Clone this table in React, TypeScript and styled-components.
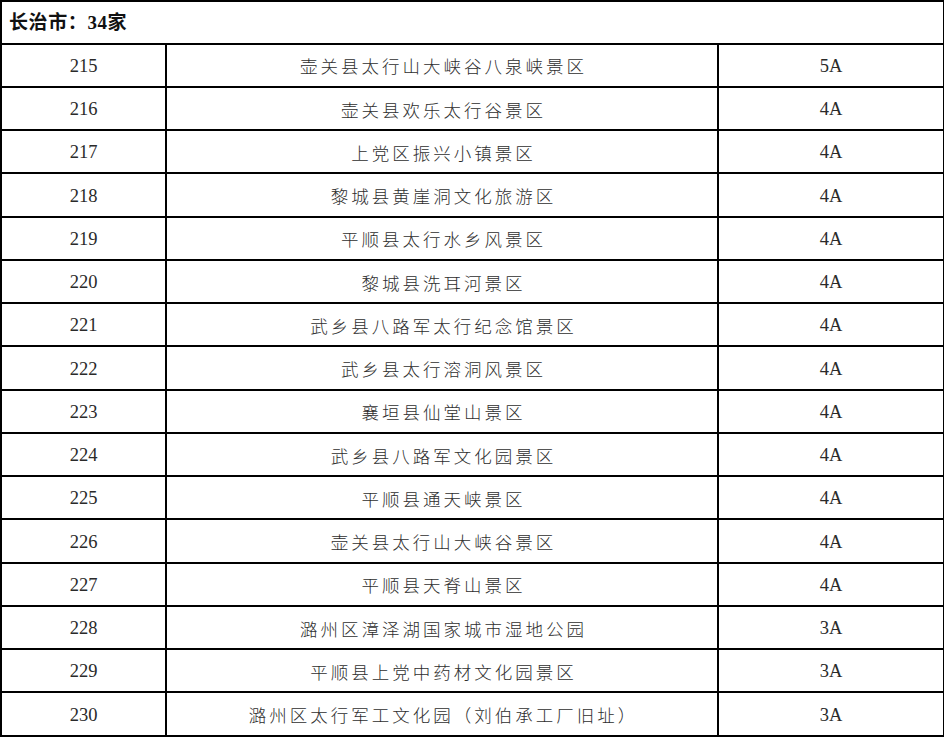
import React from "react";
import styled, { createGlobalStyle } from "styled-components";

const GlobalStyle = createGlobalStyle`
  html, body {
    margin: 0;
    padding: 0;
    background: #ffffff;
  }
`;

const rows: [number, string, string][] = [
  [215, "壶关县太行山大峡谷八泉峡景区", "5A"],
  [216, "壶关县欢乐太行谷景区", "4A"],
  [217, "上党区振兴小镇景区", "4A"],
  [218, "黎城县黄崖洞文化旅游区", "4A"],
  [219, "平顺县太行水乡风景区", "4A"],
  [220, "黎城县洗耳河景区", "4A"],
  [221, "武乡县八路军太行纪念馆景区", "4A"],
  [222, "武乡县太行溶洞风景区", "4A"],
  [223, "襄垣县仙堂山景区", "4A"],
  [224, "武乡县八路军文化园景区", "4A"],
  [225, "平顺县通天峡景区", "4A"],
  [226, "壶关县太行山大峡谷景区", "4A"],
  [227, "平顺县天脊山景区", "4A"],
  [228, "潞州区漳泽湖国家城市湿地公园", "3A"],
  [229, "平顺县上党中药材文化园景区", "3A"],
  [230, "潞州区太行军工文化园（刘伯承工厂旧址）", "3A"],
];

const Table = styled.table`
  width: 943px;
  border-collapse: collapse;
  table-layout: fixed;
  background: #ffffff;
`;

const Row = styled.tr<{ $head?: boolean }>`
  height: ${(p) => (p.$head ? "42.5px" : "43.25px")};
`;

const HeaderCell = styled.th`
  border: 2.4px solid #000000;
  padding: 0 0 0 7px;
  text-align: left;
  line-height: 1;
  font-family: "Liberation Serif", "Noto Sans CJK SC", serif;
  font-weight: 700;
  font-size: 19px;
  letter-spacing: 0.6px;
  color: #111111;
`;

const Cell = styled.td<{ $cjk?: boolean }>`
  border: 2.4px solid #000000;
  padding: 0;
  text-align: center;
  vertical-align: middle;
  line-height: 1;
  color: ${(p) => (p.$cjk ? "#2e2e2e" : "#2a2a2a")};
  font-family: ${(p) =>
    p.$cjk
      ? `"Noto Sans CJK SC", "Liberation Serif", sans-serif`
      : `"Liberation Serif", serif`};
  font-size: ${(p) => (p.$cjk ? "17.5px" : "18.5px")};
  font-weight: ${(p) => (p.$cjk ? 300 : 400)};
  letter-spacing: ${(p) => (p.$cjk ? "3px" : "0")};
  padding-left: ${(p) => (p.$cjk ? "3px" : "0")};
  padding-top: 2px;
`;

export default function App() {
  return (
    <>
      <GlobalStyle />
      <Table>
        <colgroup>
          <col style={{ width: 165 }} />
          <col style={{ width: 552 }} />
          <col style={{ width: 226 }} />
        </colgroup>
        <thead>
          <Row $head>
            <HeaderCell colSpan={3}>长治市：34家</HeaderCell>
          </Row>
        </thead>
        <tbody>
          {rows.map(([no, name, grade]) => (
            <Row key={no}>
              <Cell>{no}</Cell>
              <Cell $cjk>{name}</Cell>
              <Cell>{grade}</Cell>
            </Row>
          ))}
        </tbody>
      </Table>
    </>
  );
}
